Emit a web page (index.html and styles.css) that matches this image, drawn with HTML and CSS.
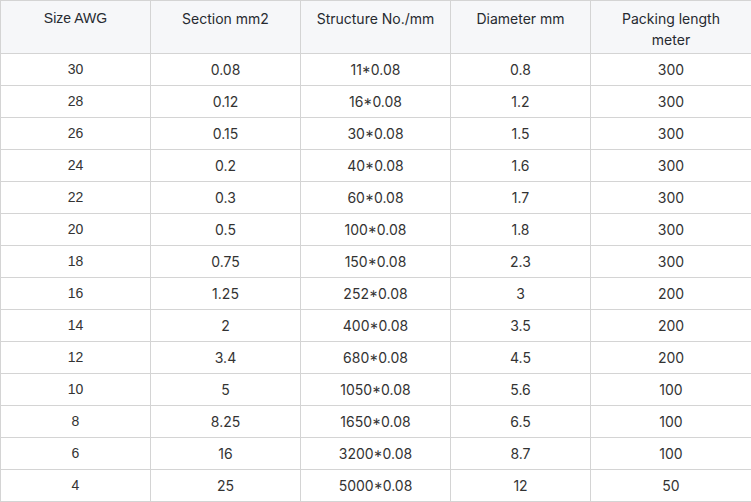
FILE: index.html
```html
<!DOCTYPE html>
<html>
<head>
<meta charset="utf-8">
<link rel="stylesheet" href="styles.css">
</head>
<body>
<div class="wrap">
<table class="spec">
<colgroup>
<col class="c1"><col class="c2"><col class="c3"><col class="c4"><col class="c5">
</colgroup>
<thead>
<tr><th class="arial">Size AWG</th><th>Section mm2</th><th>Structure No./mm</th><th>Diameter mm</th><th>Packing length<br>meter</th></tr>
</thead>
<tbody>
<tr><td class="arial">30</td><td>0.08</td><td>11*0.08</td><td>0.8</td><td>300</td></tr>
<tr><td class="arial">28</td><td>0.12</td><td>16*0.08</td><td>1.2</td><td>300</td></tr>
<tr><td class="arial">26</td><td>0.15</td><td>30*0.08</td><td>1.5</td><td>300</td></tr>
<tr><td class="arial">24</td><td>0.2</td><td>40*0.08</td><td>1.6</td><td>300</td></tr>
<tr><td class="arial">22</td><td>0.3</td><td>60*0.08</td><td>1.7</td><td>300</td></tr>
<tr><td class="arial">20</td><td>0.5</td><td>100*0.08</td><td>1.8</td><td>300</td></tr>
<tr><td class="arial">18</td><td>0.75</td><td>150*0.08</td><td>2.3</td><td>300</td></tr>
<tr><td class="arial">16</td><td>1.25</td><td>252*0.08</td><td>3</td><td>200</td></tr>
<tr><td class="arial">14</td><td>2</td><td>400*0.08</td><td>3.5</td><td>200</td></tr>
<tr><td class="arial">12</td><td>3.4</td><td>680*0.08</td><td>4.5</td><td>200</td></tr>
<tr><td class="arial">10</td><td>5</td><td>1050*0.08</td><td>5.6</td><td>100</td></tr>
<tr><td class="arial">8</td><td>8.25</td><td>1650*0.08</td><td>6.5</td><td>100</td></tr>
<tr><td class="arial">6</td><td>16</td><td>3200*0.08</td><td>8.7</td><td>100</td></tr>
<tr><td class="arial">4</td><td>25</td><td>5000*0.08</td><td>12</td><td>50</td></tr>
</tbody>
</table>
</div>
</body>
</html>
```
FILE: styles.css
```css
html, body {
  margin: 0;
  padding: 0;
  background: #fff;
  overflow: hidden;
}
.wrap {
  width: 751px;
  overflow: hidden;
}
.spec {
  border-collapse: separate;
  border-spacing: 0;
  table-layout: fixed;
  width: 751px;
  border-top: 1px solid #d4d4d4;
  border-left: 1px solid #d4d4d4;
  font-family: Inter, "Liberation Sans", sans-serif;
  font-size: 14px;
  color: #333;
}
.c1 { width: 150px; }
.c2 { width: 150px; }
.c3 { width: 150px; }
.c4 { width: 140px; }
.c5 { width: 160px; }
.spec th, .spec td {
  border-right: 1px solid #d4d4d4;
  border-bottom: 1px solid #d4d4d4;
  text-align: center;
  padding: 0 2px;
  box-sizing: border-box;
}
.spec th:last-child, .spec td:last-child {
  border-right: none;
}
.spec th {
  font-weight: normal;
  background: #f6f7f9;
  vertical-align: top;
  height: 53px;
  padding-top: 7px;
  line-height: 21px;
  color: #262a30;
}
.spec td {
  height: 32px;
  line-height: 31px;
  vertical-align: middle;
}
.spec .arial {
  font-family: "Liberation Sans", Arial, sans-serif;
  font-size: 14px;
}
```
